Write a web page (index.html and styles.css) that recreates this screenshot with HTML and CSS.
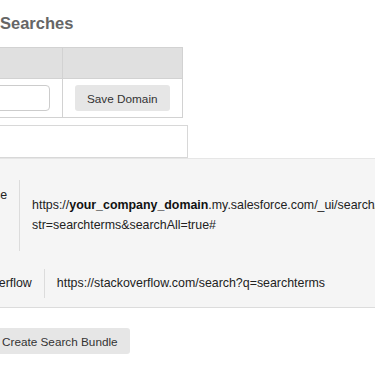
FILE: index.html
```html
<!DOCTYPE html>
<html lang="en">
<head>
<meta charset="utf-8">
<title>Custom Searches</title>
<link rel="stylesheet" href="styles.css">
</head>
<body>
<div class="page">
  <h2 class="title">Custom Searches</h2>

  <div class="domains">
    <div class="head"></div>
    <div class="head col-action"></div>
    <div class="cell"><input class="domain-input" type="text"></div>
    <div class="cell col-action"><button class="btn">Save Domain</button></div>
  </div>

  <div class="name-box"></div>

  <div class="panel">
    <div class="row">
      <div class="label">Salesforce Unified Search</div>
      <div class="url"><span>https://<b>your_company_domain</b>.my.salesforce.com/_ui/search/ui/UnifiedSearchResults?<br>str=searchterms&amp;searchAll=true#</span></div>
    </div>
    <div class="row">
      <div class="label">Stack Overflow</div>
      <div class="url"><span>https://stackoverflow.com/search?q=searchterms</span></div>
    </div>
  </div>

  <div class="actions">
    <button class="btn">Create Search Bundle</button>
  </div>
</div>
</body>
</html>
```

FILE: styles.css
```css
html, body {
  margin: 0;
  padding: 0;
  overflow: hidden;
  background: #ffffff;
}

body {
  font-family: "Liberation Sans", Arial, Helvetica, sans-serif;
  color: #222222;
}

.page {
  margin-left: -66px;
  width: 441px;
}

.title {
  margin: 14px 0 14px;
  font-size: 16.5px;
  line-height: 19px;
  font-weight: 700;
  color: #666666;
}

.domains {
  display: grid;
  grid-template-columns: 127px auto;
  width: max-content;
  border: 1px solid #d2d2d2;
}

.head {
  height: 30px;
  background: #e0e0e0;
  border-bottom: 1px solid #d2d2d2;
}

.cell {
  padding: 6px 12px;
  display: flex;
  align-items: center;
}

.col-action {
  border-left: 1px solid #d2d2d2;
}

.domain-input {
  box-sizing: border-box;
  width: 100%;
  height: 26px;
  margin: 0;
  border: 1px solid #cccccc;
  border-radius: 4px;
  background: #ffffff;
}

.btn {
  height: 26px;
  padding: 0 12px;
  margin: 0;
  border: 0;
  border-radius: 3px;
  background: #e6e6e6;
  color: #333333;
  font-family: "Liberation Sans", Arial, Helvetica, sans-serif;
  font-size: 11.75px;
  white-space: nowrap;
}

.name-box {
  box-sizing: border-box;
  width: 254px;
  height: 33px;
  margin-top: 7px;
  border: 1px solid #d8d8d8;
  background: #ffffff;
}

.panel {
  display: flex;
  flex-direction: column;
  gap: 18px;
  padding: 21px 0 9px 14.5px;
  background: #f5f5f5;
  border-top: 1px solid #e6e6e6;
  border-bottom: 1px solid #dcdcdc;
}

.row {
  display: flex;
  font-size: 12.4px;
  line-height: 20.5px;
}

.label {
  padding: 4.5px 12px 4.5px 0;
}

.url {
  display: flex;
  align-items: center;
  padding: 4.5px 12px;
  border-left: 1px solid #dcdcdc;
  white-space: nowrap;
}

.url b {
  color: #111111;
}

.actions {
  margin-top: 20px;
  padding-left: 56px;
}
```
